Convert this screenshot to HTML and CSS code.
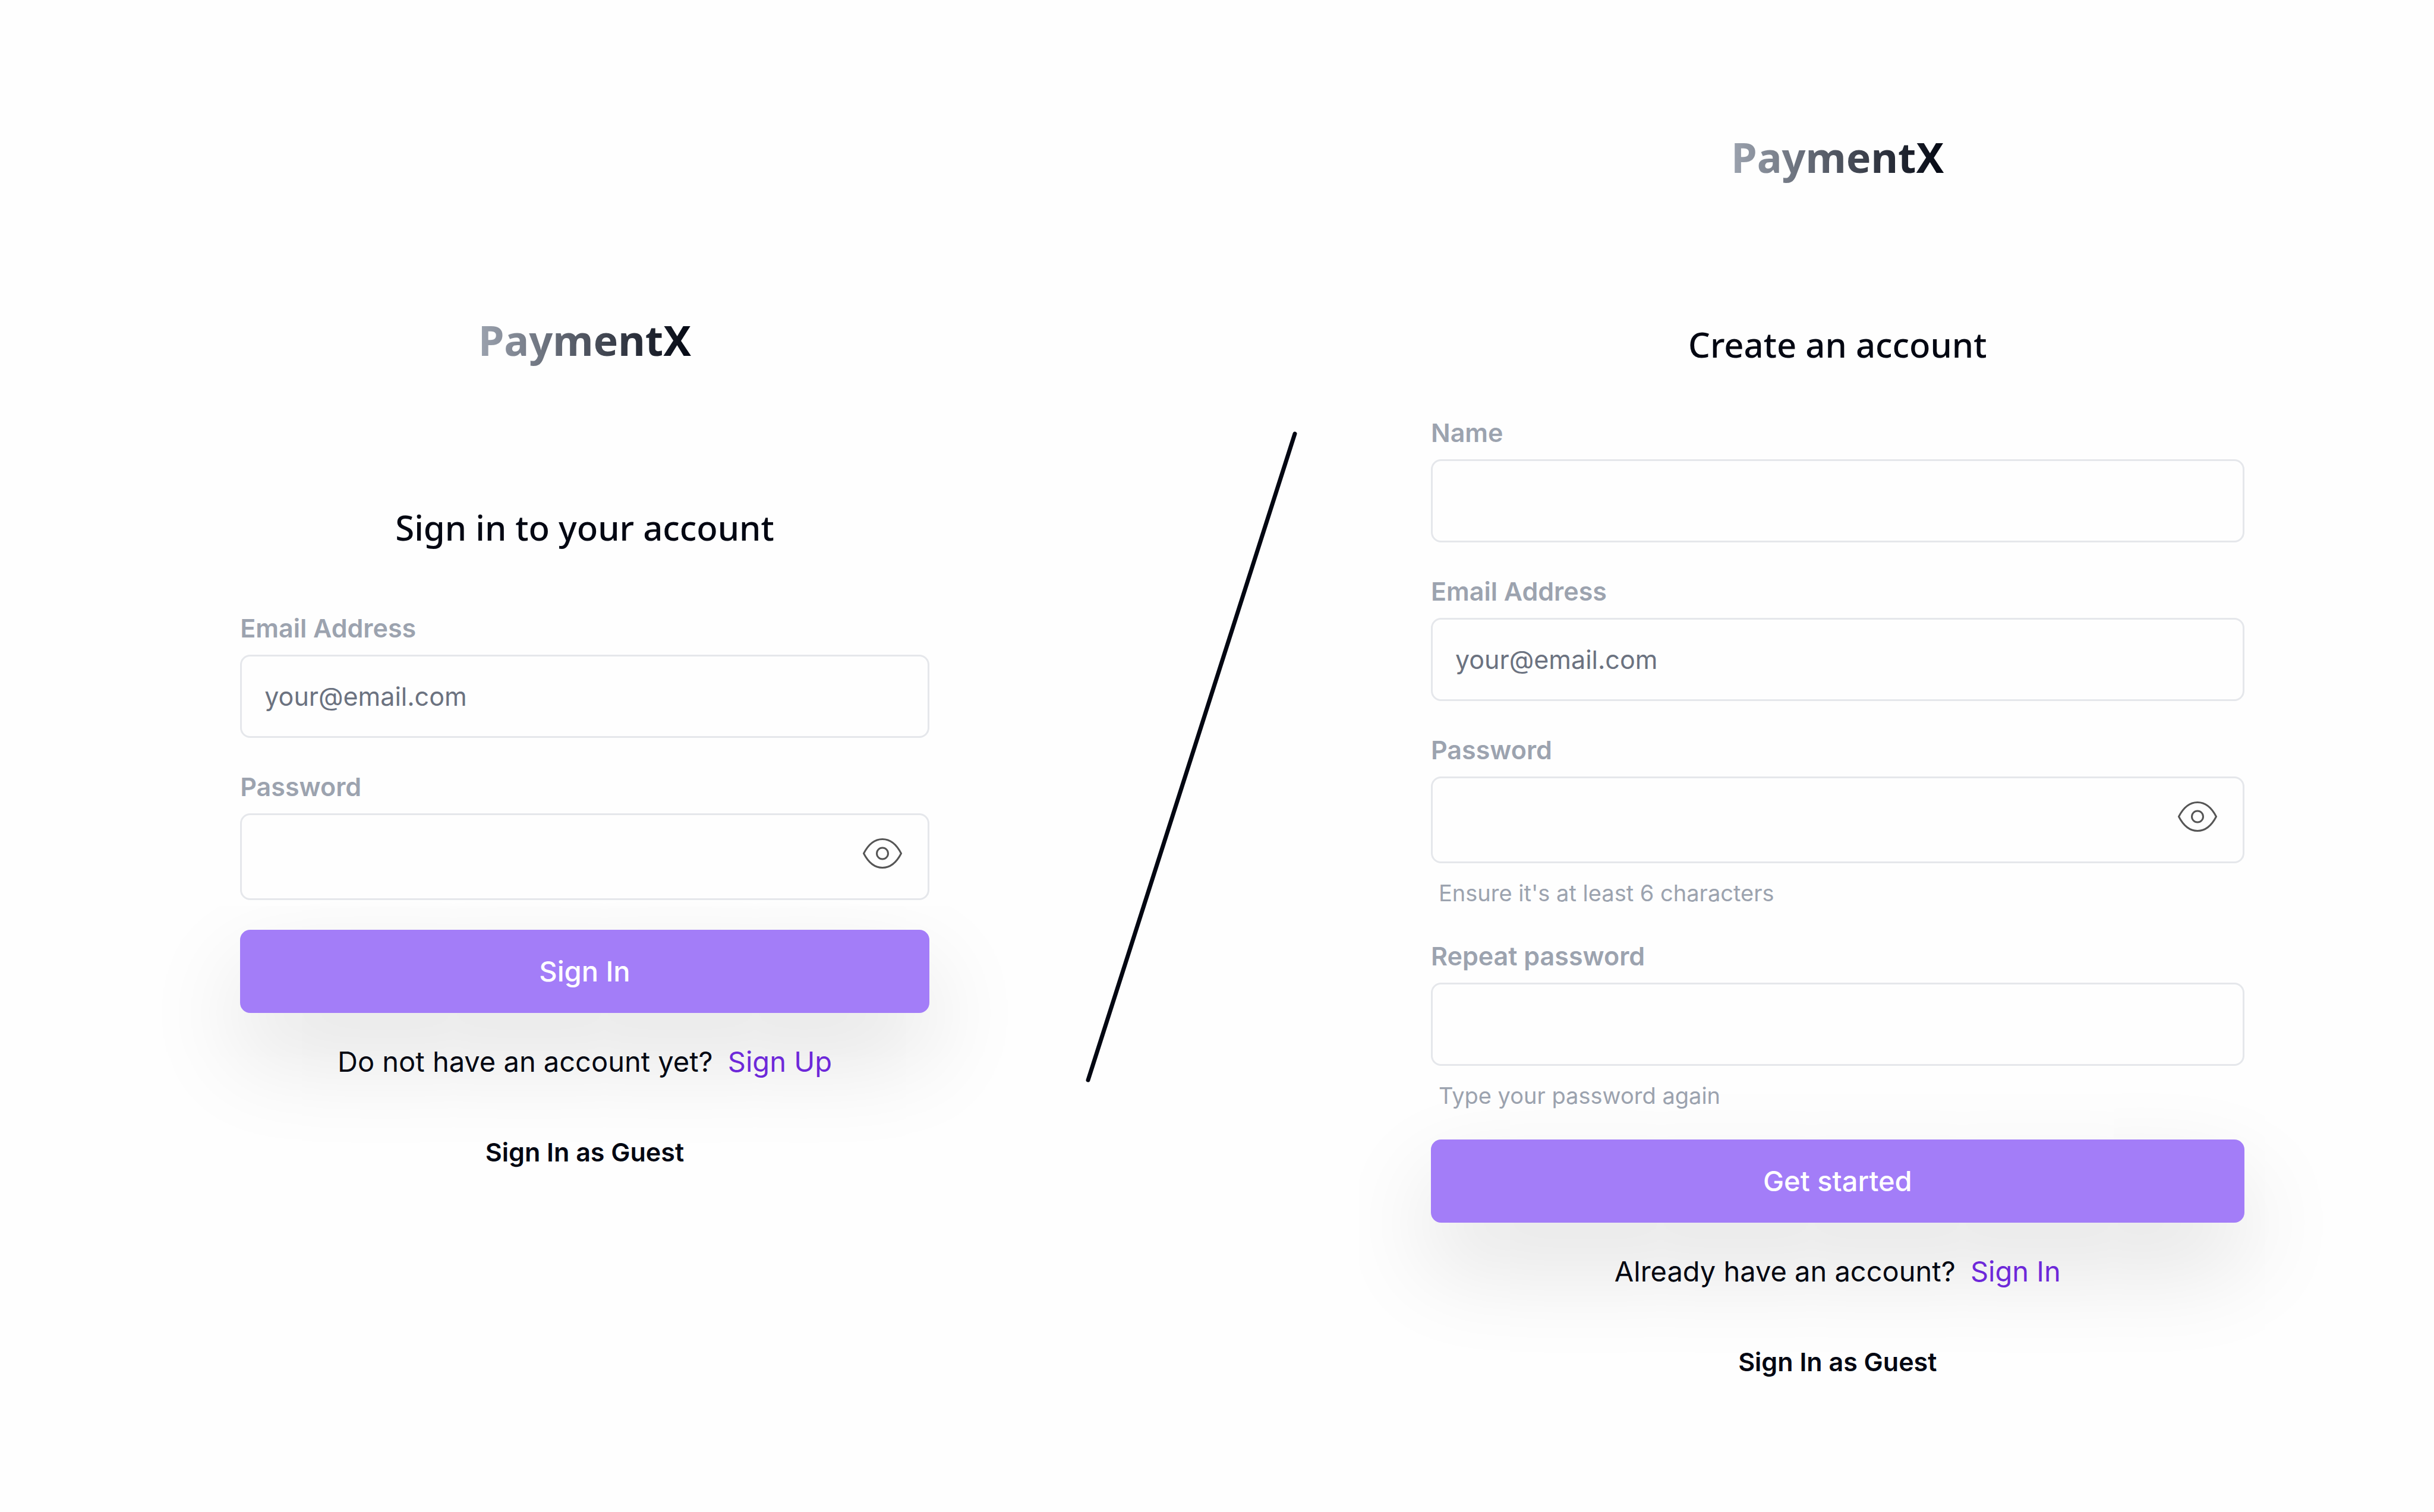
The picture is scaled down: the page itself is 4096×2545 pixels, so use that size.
FILE: index.html
```html
<!DOCTYPE html>
<html lang="en">
<head>
<meta charset="utf-8">
<meta name="viewport" content="width=device-width, initial-scale=1">
<title>PaymentX</title>
<link rel="stylesheet" href="styles.css">
</head>
<body>
<main class="page">
  <section class="panel panel-signin" id="signin">
    <div class="logo">PaymentX</div>
    <h1 class="title">Sign in to your account</h1>
    <form class="form">
      <div class="field">
        <label class="label" for="signin-email">Email Address</label>
        <input class="input" id="signin-email" type="email" placeholder="your@email.com">
      </div>
      <div class="field">
        <label class="label" for="signin-password">Password</label>
        <div class="password">
          <input class="password-input" id="signin-password" type="password">
          <button class="reveal" type="button" aria-label="Show password">
            <svg class="eye" viewBox="0 0 66 51"><path d="M1.5 25.5C9 11 20 1.5 33 1.5S57 11 64.5 25.5C57 40 46 49.5 33 49.5S9 40 1.5 25.5Z"/><circle cx="33" cy="25.5" r="9.5"/></svg>
          </button>
        </div>
      </div>
      <button class="submit" type="submit">Sign In</button>
    </form>
    <p class="switch">Do not have an account yet? <a class="link" href="#signup">Sign Up</a></p>
    <button class="guest" type="button">Sign In as Guest</button>
  </section>

  <svg class="divider" viewBox="0 0 356 1096" aria-hidden="true"><line x1="4" y1="1092" x2="352" y2="4"/></svg>

  <section class="panel panel-signup" id="signup">
    <div class="logo">PaymentX</div>
    <h1 class="title">Create an account</h1>
    <form class="form">
      <div class="field">
        <label class="label" for="name">Name</label>
        <input class="input" id="name" type="text">
      </div>
      <div class="field">
        <label class="label" for="email">Email Address</label>
        <input class="input" id="email" type="email" placeholder="your@email.com">
      </div>
      <div class="field">
        <label class="label" for="password">Password</label>
        <div class="password">
          <input class="password-input" id="password" type="password">
          <button class="reveal" type="button" aria-label="Show password">
            <svg class="eye" viewBox="0 0 66 51"><path d="M1.5 25.5C9 11 20 1.5 33 1.5S57 11 64.5 25.5C57 40 46 49.5 33 49.5S9 40 1.5 25.5Z"/><circle cx="33" cy="25.5" r="9.5"/></svg>
          </button>
        </div>
        <p class="hint">Ensure it's at least 6 characters</p>
      </div>
      <div class="field">
        <label class="label" for="repeat">Repeat password</label>
        <input class="input" id="repeat" type="password">
        <p class="hint">Type your password again</p>
      </div>
      <button class="submit" type="submit">Get started</button>
    </form>
    <p class="switch">Already have an account? <a class="link" href="#signin">Sign In</a></p>
    <button class="guest" type="button">Sign In as Guest</button>
  </section>
</main>
</body>
</html>
```
FILE: styles.css
```css
* {
  box-sizing: border-box;
}

body {
  margin: 0;
  background: #fefefe;
  color: #030712;
  font-family: Inter, "Liberation Sans", sans-serif;
  font-size: 43px;
  line-height: 56px;
}

.page {
  display: grid;
  grid-template-columns: 1159fr 844fr 1368fr;
  align-items: start;
  min-height: 100vh;
  padding: 0 7.8% 0 9.87%;
}

.panel {
  display: flex;
  flex-direction: column;
  align-items: center;
}

.panel-signin {
  padding-top: 524px;
}

.panel-signup {
  padding-top: 216px;
}

.logo {
  font-family: "Noto Sans", sans-serif;
  font-size: 70px;
  font-weight: 700;
  line-height: 96px;
  background: linear-gradient(to right, #9ca3af, #030712);
  background-clip: text;
  -webkit-background-clip: text;
  color: transparent;
}

.title {
  margin: 228px 0 0;
  font-family: "Noto Sans", sans-serif;
  font-size: 58px;
  font-weight: 500;
  line-height: 80px;
}

.form {
  display: flex;
  flex-direction: column;
  gap: 54px;
  width: 100%;
  margin-top: 80px;
}

.panel-signin .form {
  margin-top: 101px;
}

.field {
  display: flex;
  flex-direction: column;
}

.label {
  margin-bottom: 17px;
  color: #9ca3af;
  font-weight: 600;
}

.input,
.password {
  width: 100%;
  border: 3px solid #e5e7eb;
  border-radius: 17px;
  background: transparent;
}

.input {
  height: 140px;
  padding: 0 38px;
  color: #030712;
  font: inherit;
}

.input::placeholder {
  color: #6b7280;
  opacity: 1;
}

.password {
  display: flex;
  align-items: center;
  height: 146px;
  padding: 0 43px 12px 38px;
}

.password-input {
  flex: 1;
  min-width: 0;
  padding: 0;
  border: 0;
  background: transparent;
  font: inherit;
}

.reveal {
  padding: 0;
  border: 0;
  background: transparent;
}

.eye {
  display: block;
  width: 66px;
  height: 51px;
  fill: none;
  stroke: #555;
  stroke-width: 3;
  stroke-linejoin: round;
}

.hint {
  margin: 26px 0 0;
  padding-left: 13px;
  color: #9ca3af;
  font-size: 38px;
  line-height: 48px;
}

.submit {
  height: 140px;
  margin-top: -4px;
  border: 0;
  border-radius: 17px;
  background: #a37df8;
  box-shadow: 0 70px 168px rgba(0, 0, 0, 0.12);
  color: #fff;
  font: inherit;
  font-size: 47px;
  font-weight: 500;
}

.switch {
  margin: 54px 0 0;
  font-size: 47px;
}

.link {
  margin-left: 12px;
  color: #6d28d9;
  text-decoration: none;
}

.guest {
  margin-top: 96px;
  padding: 0;
  border: 0;
  background: transparent;
  color: inherit;
  font: inherit;
  font-weight: 600;
}

.divider {
  justify-self: center;
  width: 356px;
  margin: 726px 0 0 38px;
  stroke: #030712;
  stroke-width: 7;
  stroke-linecap: round;
}
```
